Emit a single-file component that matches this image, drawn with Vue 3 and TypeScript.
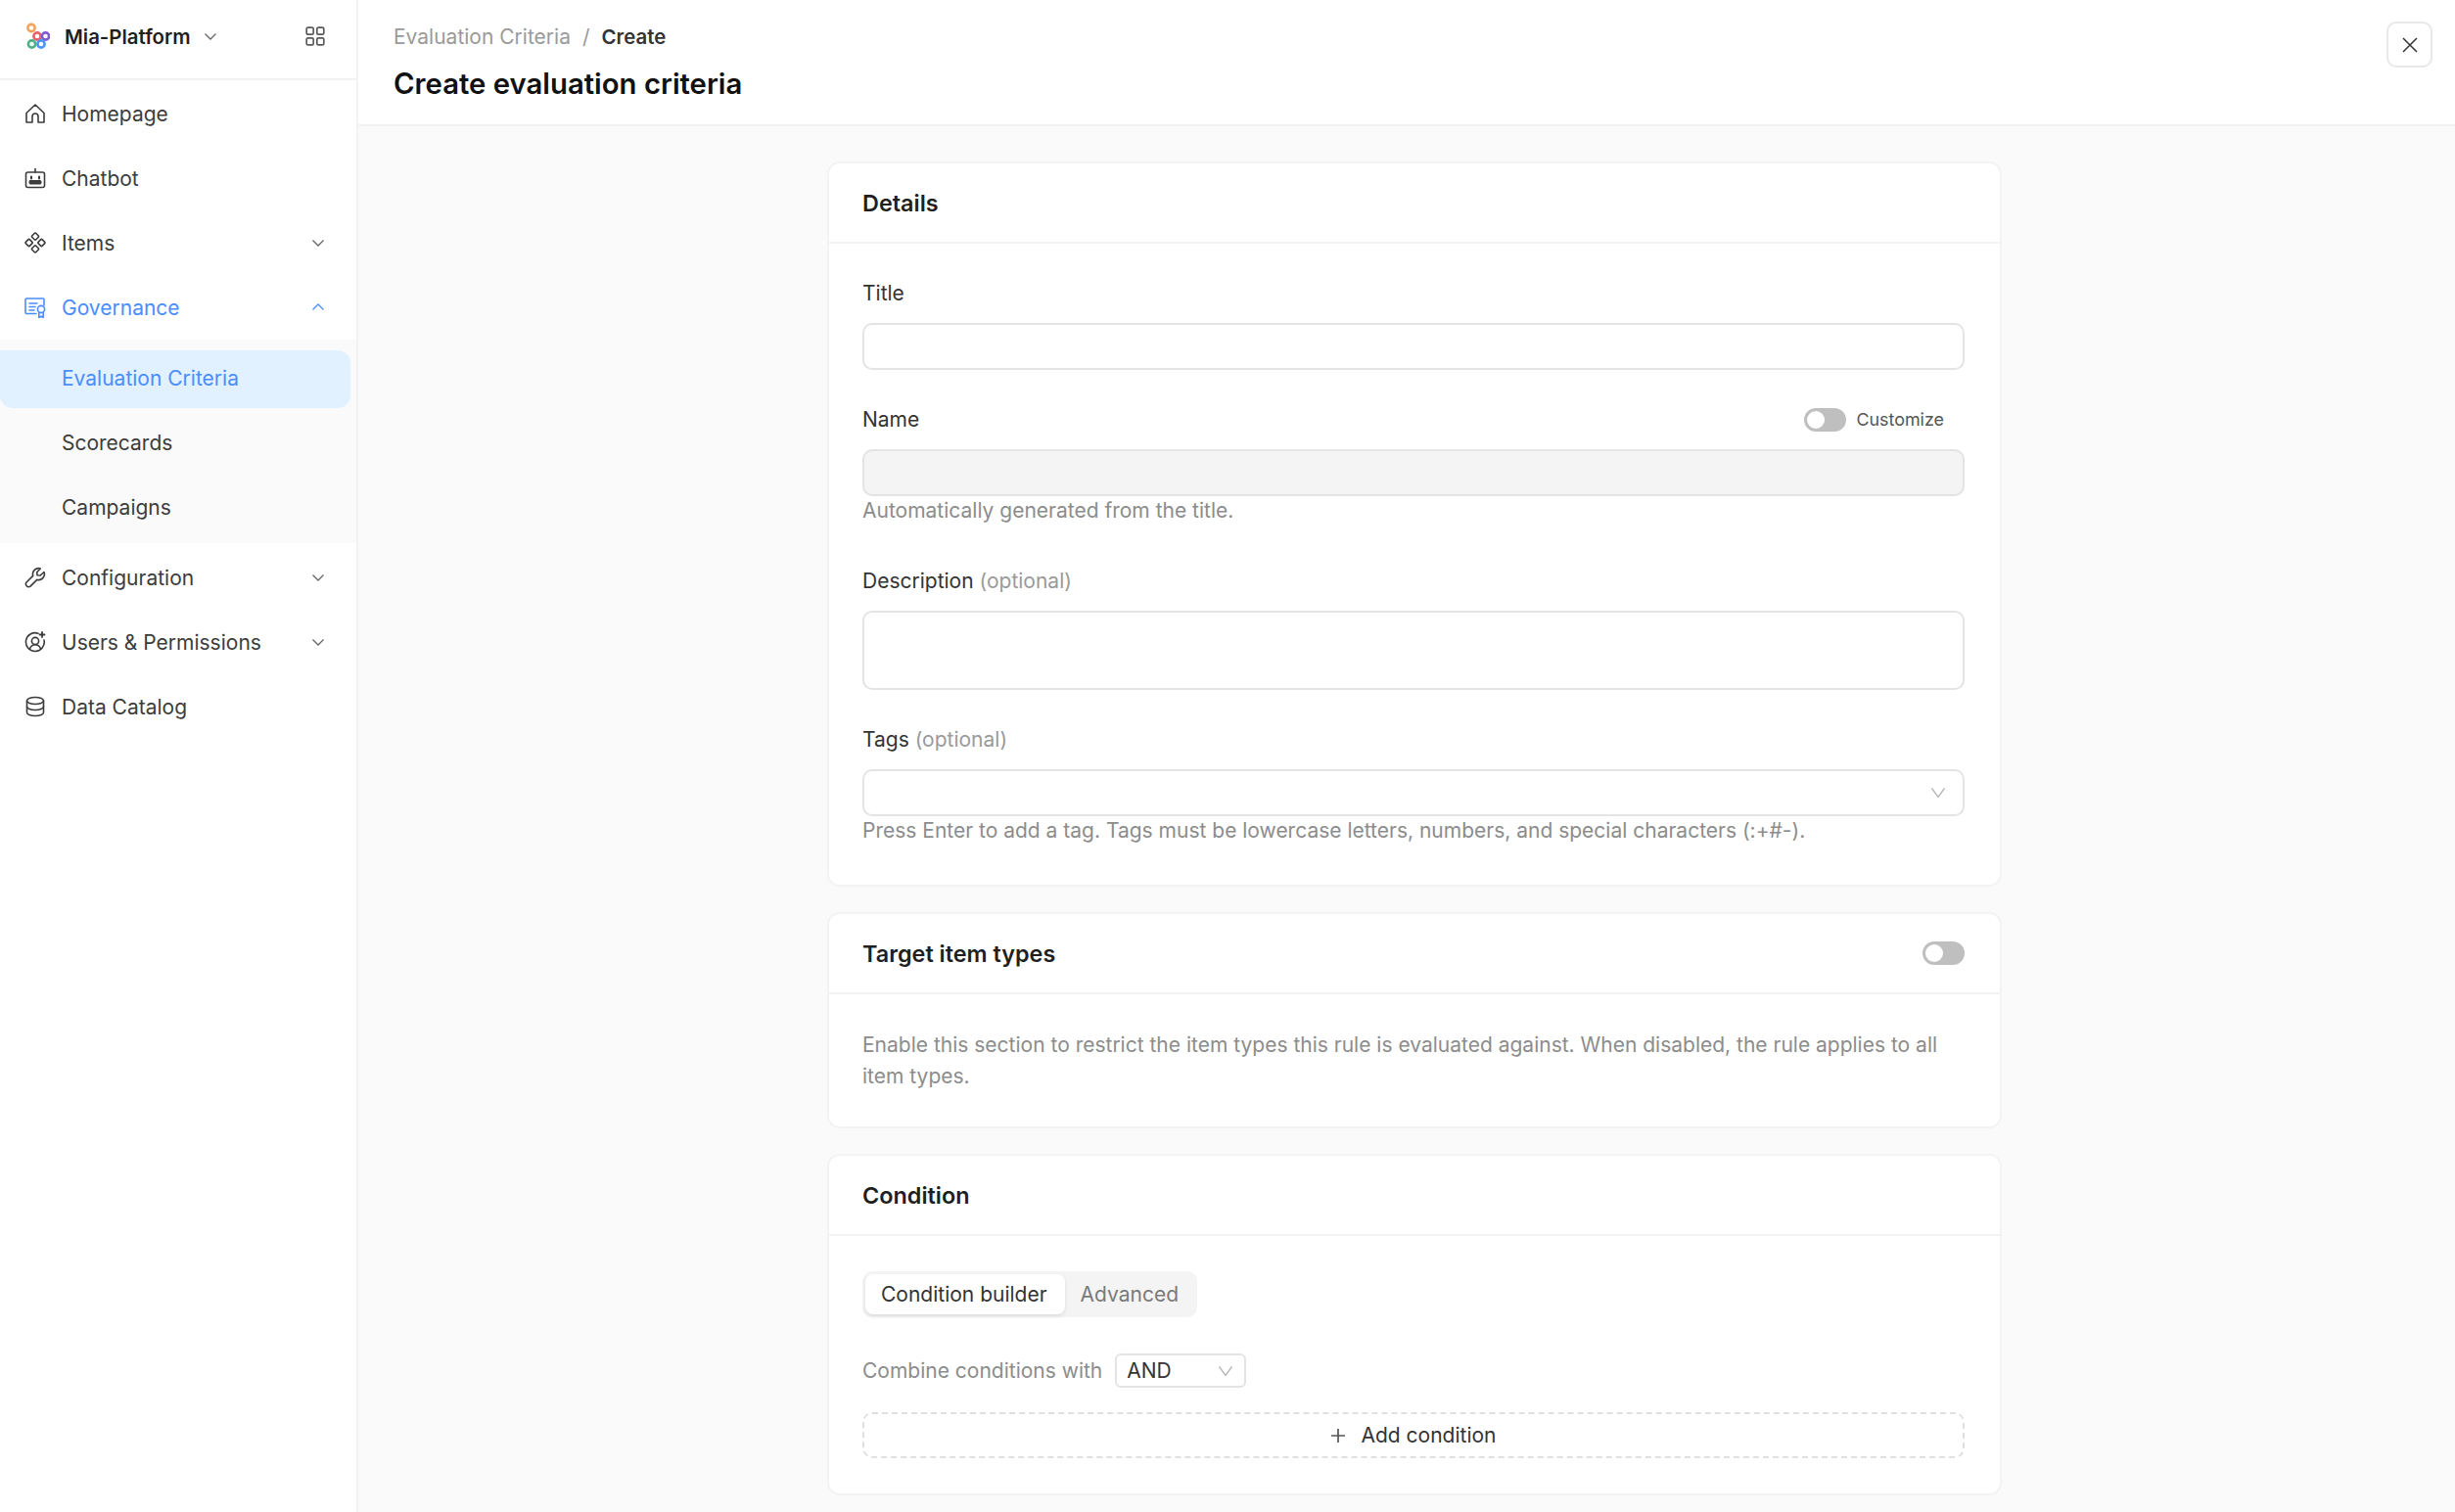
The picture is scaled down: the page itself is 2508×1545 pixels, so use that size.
<script setup lang="ts">
interface SubItem {
  label: string
  active?: boolean
}

interface NavItem {
  label: string
  icon: string
  caret?: 'down' | 'up'
  active?: boolean
  children?: SubItem[]
}

const navItems: NavItem[] = [
  { label: 'Homepage', icon: 'home' },
  { label: 'Chatbot', icon: 'bot' },
  { label: 'Items', icon: 'items', caret: 'down' },
  {
    label: 'Governance',
    icon: 'gov',
    caret: 'up',
    active: true,
    children: [
      { label: 'Evaluation Criteria', active: true },
      { label: 'Scorecards' },
      { label: 'Campaigns' },
    ],
  },
  { label: 'Configuration', icon: 'tool', caret: 'down' },
  { label: 'Users & Permissions', icon: 'users', caret: 'down' },
  { label: 'Data Catalog', icon: 'data' },
]
</script>

<template>
  <div class="page">
    <aside class="sidebar">
      <div class="brand">
        <svg class="logo" viewBox="0 0 26 28" fill="none" stroke-width="2.6">
          <circle cx="7" cy="5.5" r="3.6" stroke="#f5a35c" />
          <circle cx="13" cy="14" r="3.6" stroke="#ec5f6f" />
          <circle cx="21.5" cy="14" r="3.6" stroke="#7d5bd6" />
          <circle cx="7.5" cy="22" r="3.6" stroke="#4fb286" />
          <circle cx="17" cy="22" r="3.6" stroke="#4a97f2" />
        </svg>
        <span class="brand-name">Mia-Platform</span>
        <svg class="caret brand-caret" viewBox="0 0 14 14" fill="none" stroke="currentColor" stroke-width="1.3">
          <path d="M1.5 4.5 7 10l5.5-5.5" />
        </svg>
        <svg class="grid-icon" viewBox="0 0 20 20" fill="none" stroke="#5a5a5a" stroke-width="1.7">
          <rect x="1.2" y="1.2" width="7" height="7" rx="1.4" />
          <rect x="11.8" y="1.2" width="7" height="7" rx="1.4" />
          <rect x="1.2" y="11.8" width="7" height="7" rx="1.4" />
          <rect x="11.8" y="11.8" width="7" height="7" rx="1.4" />
        </svg>
      </div>

      <nav class="nav">
        <template v-for="item in navItems" :key="item.label">
          <div class="nav-item" :class="{ active: item.active }">
            <svg class="nav-icon" viewBox="0 0 22 22" fill="none" stroke="currentColor" stroke-width="1.6" stroke-linejoin="round" stroke-linecap="round">
              <template v-if="item.icon === 'home'">
                <path d="M2 10.5 11 2l9 8.5V20h-6v-6a3 3 0 0 0-6 0v6H2z" />
              </template>
              <template v-else-if="item.icon === 'bot'">
                <path d="M11 1.5V5" />
                <rect x="1.5" y="5" width="19" height="15.5" rx="2" />
                <path d="M7 9.5v2M15 9.5v2" stroke-width="2" />
                <rect x="5" y="13.5" width="12" height="3.5" rx="1" fill="currentColor" stroke-width="1" />
              </template>
              <template v-else-if="item.icon === 'items'">
                <rect x="8.2" y="1.8" width="5.6" height="5.6" rx="1.2" transform="rotate(45 11 4.6)" />
                <rect x="8.2" y="14.6" width="5.6" height="5.6" rx="1.2" transform="rotate(45 11 17.4)" />
                <rect x="1.8" y="8.2" width="5.6" height="5.6" rx="1.2" transform="rotate(45 4.6 11)" />
                <rect x="14.6" y="8.2" width="5.6" height="5.6" rx="1.2" transform="rotate(45 17.4 11)" />
              </template>
              <template v-else-if="item.icon === 'gov'">
                <path d="M12 17.5H2a1 1 0 0 1-1-1V3a1 1 0 0 1 1-1h17a1 1 0 0 1 1 1v6" />
                <path d="M5 7h8M5 10.5h6M5 14h5" />
                <circle cx="17" cy="13" r="3.6" />
                <path d="M14.8 16.5v5l2.2-1.4 2.2 1.4v-5" />
              </template>
              <template v-else-if="item.icon === 'tool'">
                <path d="M20 5.5 16.2 9 13 8.7 12.7 5.7 16.3 2a6 6 0 0 0-7.6 7.4L2 16a2.9 2.9 0 0 0 4 4.1l6.8-6.7A6 6 0 0 0 20 5.5z" />
              </template>
              <template v-else-if="item.icon === 'users'">
                <path d="M14 2.2A9.4 9.4 0 1 0 20 9" />
                <circle cx="11" cy="10" r="3.6" />
                <path d="M5.5 18c1-3 3-4.2 5.5-4.2s4.5 1.2 5.5 4.2" />
                <path d="M18 1v5M15.5 3.5h5" stroke-width="1.8" />
              </template>
              <template v-else>
                <ellipse cx="11" cy="5" rx="8.5" ry="3.5" />
                <path d="M2.5 5v12c0 2 3.8 3.5 8.5 3.5s8.5-1.5 8.5-3.5V5" />
                <path d="M2.5 11c0 2 3.8 3.5 8.5 3.5s8.5-1.5 8.5-3.5" />
              </template>
            </svg>
            <span class="nav-label">{{ item.label }}</span>
            <svg v-if="item.caret" class="caret" :class="{ up: item.caret === 'up' }" viewBox="0 0 14 14" fill="none" stroke="currentColor" stroke-width="1.3">
              <path d="M1.5 4.5 7 10l5.5-5.5" />
            </svg>
          </div>
          <div v-if="item.children" class="submenu">
            <div
              v-for="child in item.children"
              :key="child.label"
              class="sub-item"
              :class="{ active: child.active }"
            >
              {{ child.label }}
            </div>
          </div>
        </template>
      </nav>
    </aside>

    <main class="main">
      <header class="topbar">
        <div>
          <div class="breadcrumb">
            <span>Evaluation Criteria</span>
            <span class="sep">/</span>
            <span class="current">Create</span>
          </div>
          <h1 class="page-title">Create evaluation criteria</h1>
        </div>
        <button class="close-btn" type="button">
          <svg viewBox="0 0 16 16" fill="none" stroke="#333" stroke-width="1.5">
            <path d="M1 1l14 14M15 1 1 15" />
          </svg>
        </button>
      </header>

      <div class="content">
        <section class="card">
          <div class="card-head"><h2>Details</h2></div>
          <div class="card-body details">
            <label class="field-label">Title</label>
            <div class="input"></div>

            <div class="field-label row name-row">
              <span>Name</span>
              <span class="customize"><i class="switch"></i>Customize</span>
            </div>
            <div class="input disabled"></div>
            <p class="help">Automatically generated from the title.</p>

            <label class="field-label desc-label">Description <em>(optional)</em></label>
            <div class="input area"></div>

            <label class="field-label tags-label">Tags <em>(optional)</em></label>
            <div class="input select">
              <svg class="sel-caret" viewBox="0 0 16 14" fill="none" stroke="#b5b5b5" stroke-width="1.3">
                <path d="M1.5 2.5 8 11.5 14.5 2.5" />
              </svg>
            </div>
            <p class="help">Press Enter to add a tag. Tags must be lowercase letters, numbers, and special characters (:+#-).</p>
          </div>
        </section>

        <section class="card">
          <div class="card-head spread">
            <h2>Target item types</h2>
            <i class="switch"></i>
          </div>
          <div class="card-body target">
            <p class="note">Enable this section to restrict the item types this rule is evaluated against. When disabled, the rule applies to all item types.</p>
          </div>
        </section>

        <section class="card">
          <div class="card-head"><h2>Condition</h2></div>
          <div class="card-body condition">
            <div class="segmented">
              <span class="seg on">Condition builder</span>
              <span class="seg">Advanced</span>
            </div>
            <div class="combine">
              <span class="combine-label">Combine conditions with</span>
              <div class="mini-select">
                <span>AND</span>
                <svg class="sel-caret" viewBox="0 0 16 14" fill="none" stroke="#b5b5b5" stroke-width="1.3">
                  <path d="M1.5 2.5 8 11.5 14.5 2.5" />
                </svg>
              </div>
            </div>
            <div class="add-btn">
              <svg viewBox="0 0 16 16" fill="none" stroke="#555" stroke-width="1.7">
                <path d="M8 1v14M1 8h14" />
              </svg>
              Add condition
            </div>
          </div>
        </section>
      </div>
    </main>
  </div>
</template>

<style scoped>
.page {
  display: flex;
  width: 2508px;
  height: 1545px;
  overflow: hidden;
  background: #fafafa;
  color: #333;
  font-family: Inter, 'Liberation Sans', sans-serif;
  font-size: 21px;
}

.sidebar {
  flex: 0 0 366px;
  box-sizing: border-box;
  background: #fff;
  border-right: 2px solid #f2f2f2;
}

.brand {
  display: flex;
  align-items: center;
  height: 82px;
  box-sizing: border-box;
  padding-left: 25px;
  padding-bottom: 6px;
  border-bottom: 2px solid #f2f2f2;
}

.logo {
  width: 26px;
  height: 28px;
  margin-right: 15px;
}

.brand-name {
  font-weight: 600;
  color: #1f1f1f;
  font-size: 20.4px;
}

.brand-caret {
  margin-left: 13px;
  color: #777;
}

.grid-icon {
  width: 20px;
  height: 20px;
  margin-left: auto;
  margin-right: 32px;
}

.nav {
  padding-top: 1px;
}

.nav-item {
  display: flex;
  align-items: center;
  height: 66px;
  padding: 0 32px 0 25px;
  color: #3c3c3c;
}

.nav-item.active {
  color: #4a8dff;
}

.nav-icon {
  flex: 0 0 22px;
  width: 22px;
  height: 22px;
  margin-right: 16px;
}

.nav-label {
  flex: 1;
}

.caret {
  width: 14px;
  height: 14px;
  color: #666;
}

.nav-item.active .caret {
  color: #4a8dff;
}

.caret.up {
  transform: rotate(180deg);
}

.submenu {
  padding: 11px 6px 6px 0;
  margin-bottom: 2px;
  background: #fafafa;
}

.sub-item {
  display: flex;
  align-items: center;
  box-sizing: border-box;
  height: 59px;
  margin-bottom: 7px;
  padding-left: 63px;
  padding-bottom: 3px;
  color: #3c3c3c;
}

.sub-item:last-child {
  margin-bottom: 0;
}

.sub-item.active {
  background: #e2f1ff;
  border-radius: 0 13px 13px 13px;
  color: #4a8dff;
}

.main {
  flex: 1;
  min-width: 0;
}

.topbar {
  display: flex;
  justify-content: space-between;
  height: 129px;
  box-sizing: border-box;
  padding: 24px 23px 0 36px;
  background: #fff;
  border-bottom: 2px solid #f2f2f2;
}

.breadcrumb {
  display: flex;
  gap: 12px;
  color: #9a9a9a;
  line-height: 28px;
}

.breadcrumb .current {
  color: #333;
  font-weight: 600;
  font-size: 20.4px;
}

.page-title {
  margin: 14px 0 0;
  font-size: 29.3px;
  line-height: 40px;
  font-weight: 600;
  color: #111;
}

.close-btn {
  display: flex;
  align-items: center;
  justify-content: center;
  width: 47px;
  height: 47px;
  margin-top: -2px;
  padding: 0;
  background: #fff;
  border: 2px solid #e8e8e8;
  border-radius: 10px;
}

.close-btn svg {
  width: 16px;
  height: 16px;
}

.content {
  display: flex;
  flex-direction: column;
  align-items: center;
  gap: 26px;
  padding: 36px 0 0 16px;
}

.card {
  width: 1200px;
  box-sizing: border-box;
  background: #fff;
  border: 2px solid #f3f3f3;
  border-radius: 13px;
}

.card-head {
  display: flex;
  align-items: center;
  height: 80px;
  padding: 0 36px 0 34px;
  border-bottom: 2px solid #f3f3f3;
}

.card-head.spread {
  justify-content: space-between;
}

.card-head h2 {
  margin: 0;
  font-size: 23.4px;
  font-weight: 600;
  color: #1f1f1f;
}

.card-body {
  padding: 0 36px 0 34px;
}

.details {
  padding-top: 36px;
  padding-bottom: 40px;
}

.field-label {
  display: block;
  line-height: 30px;
  margin-bottom: 15px;
  color: #333;
}

.field-label em {
  font-style: normal;
  color: #9a9a9a;
}

.name-row {
  display: flex;
  justify-content: space-between;
  align-items: center;
  margin-top: 36px;
  padding-right: 21px;
}

.customize {
  display: flex;
  align-items: center;
  gap: 10px;
  font-size: 17.9px;
  color: #555;
}

.switch {
  display: block;
  flex: none;
  box-sizing: border-box;
  width: 43px;
  height: 24px;
  border-radius: 12px;
  background: #bfbfbf;
  border: 3px solid #bfbfbf;
  position: relative;
}

.switch::before {
  content: '';
  position: absolute;
  left: 0;
  top: 0;
  width: 18px;
  height: 18px;
  border-radius: 50%;
  background: #fff;
}

.input {
  box-sizing: border-box;
  height: 48px;
  background: #fff;
  border: 2px solid #e4e4e4;
  border-radius: 10px;
}

.input.disabled {
  background: #f4f4f4;
}

.input.area {
  height: 81px;
}

.input.select {
  display: flex;
  align-items: center;
  justify-content: flex-end;
  padding-right: 17px;
}

.sel-caret {
  width: 16px;
  height: 14px;
}

.help {
  margin: 0;
  line-height: 30px;
  color: #8c8c8c;
}

.desc-label {
  margin-top: 42px;
}

.tags-label {
  margin-top: 36px;
}

.target {
  padding-top: 36px;
  padding-bottom: 35px;
}

.note {
  margin: 0;
  line-height: 32px;
  color: #8c8c8c;
}

.condition {
  padding-top: 36px;
  padding-bottom: 36px;
}

.segmented {
  display: flex;
  width: fit-content;
  padding: 3px;
  background: #f4f4f4;
  border-radius: 10px;
}

.seg {
  display: flex;
  align-items: center;
  height: 41px;
  padding: 0 16px;
  color: #7a7a7a;
  border-radius: 8px;
}

.seg.on {
  padding: 0 18px 0 16px;
  background: #fff;
  color: #333;
  box-shadow: 0 2px 4px rgba(0, 0, 0, 0.1);
}

.combine {
  display: flex;
  align-items: center;
  gap: 13px;
  margin-top: 37px;
}

.combine-label {
  color: #8c8c8c;
}

.mini-select {
  display: flex;
  align-items: center;
  justify-content: space-between;
  box-sizing: border-box;
  width: 134px;
  height: 35px;
  padding: 0 11px 0 10px;
  border: 2px solid #e4e4e4;
  border-radius: 6px;
}

.add-btn {
  display: flex;
  align-items: center;
  justify-content: center;
  gap: 15px;
  box-sizing: border-box;
  height: 47px;
  margin-top: 25px;
  border: 2px dashed #e0e0e0;
  border-radius: 10px;
  color: #333;
}

.add-btn svg {
  width: 16px;
  height: 16px;
}
</style>
